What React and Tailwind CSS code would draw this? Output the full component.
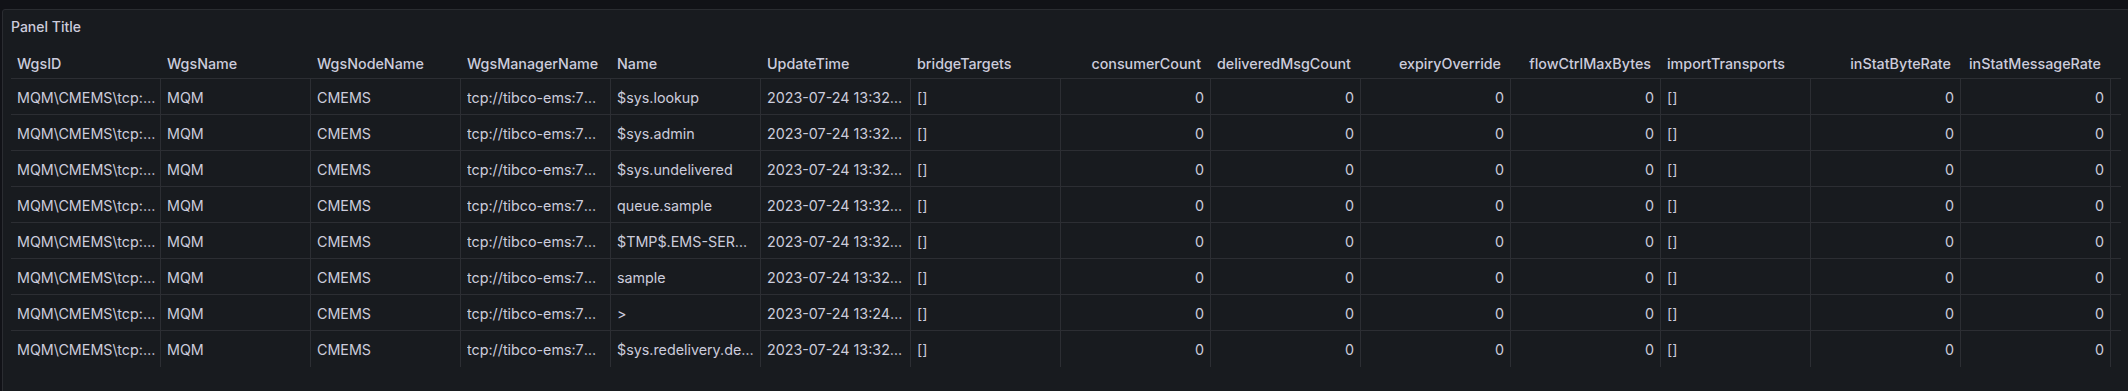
import React from "react";

const columns = [
  { name: "WgsID", align: "left", pad: "pr-[3px]" },
  { name: "WgsName", align: "left", pad: "pr-[6px]" },
  { name: "WgsNodeName", align: "left", pad: "pr-[6px]" },
  { name: "WgsManagerName", align: "left", pad: "pr-[6px]" },
  { name: "Name", align: "left", pad: "pr-[6px]" },
  { name: "UpdateTime", align: "left", pad: "pr-[6px]" },
  { name: "bridgeTargets", align: "left", pad: "pr-[6px]" },
  { name: "consumerCount", align: "right", pad: "pr-[6px]" },
  { name: "deliveredMsgCount", align: "right", pad: "pr-[6px]" },
  { name: "expiryOverride", align: "right", pad: "pr-[6px]" },
  { name: "flowCtrlMaxBytes", align: "right", pad: "pr-[6px]" },
  { name: "importTransports", align: "left", pad: "pr-[6px]" },
  { name: "inStatByteRate", align: "right", pad: "pr-[6px]" },
  { name: "inStatMessageRate", align: "right", pad: "pr-[6px]" },
  { name: "", align: "right", pad: "pr-[6px]" },
];

const queues = [
  ["$sys.lookup", "2023-07-24 13:32:05"],
  ["$sys.admin", "2023-07-24 13:32:05"],
  ["$sys.undelivered", "2023-07-24 13:32:05"],
  ["queue.sample", "2023-07-24 13:32:05"],
  ["$TMP$.EMS-SERVER.1F4C64BE4A2.1", "2023-07-24 13:32:05"],
  ["sample", "2023-07-24 13:32:05"],
  [">", "2023-07-24 13:24:51"],
  ["$sys.redelivery.delay", "2023-07-24 13:32:05"],
];

const rows = queues.map(([name, time]) => [
  "MQM\\CMEMS\\tcp://tibco-ems:7222",
  "MQM",
  "CMEMS",
  "tcp://tibco-ems:7222",
  name,
  time,
  "[]",
  "0",
  "0",
  "0",
  "0",
  "[]",
  "0",
  "0",
  "",
]);

export default function App() {
  return (
    <div
      className="w-[2128px] h-[391px] overflow-hidden bg-[#111217] pt-[9px] pl-[2px]"
      style={{ fontFamily: "Inter, 'Noto Sans', sans-serif" }}
    >
      <div className="w-[2128px] h-[420px] bg-[#181b1f] border border-[#2a2c31] rounded-[3px] flex flex-col">
        <div className="h-[32px] px-[8px] flex items-center shrink-0">
          <span className="text-[14px] font-medium text-[#ccccdc]">Panel Title</span>
        </div>
        <div className="px-[8px]">
          <div className="w-[2110px] overflow-hidden">
            <div className="flex h-[37px] border-b border-[#2c2e33] pt-[7px]">
              {columns.map((c, k) => (
                <div
                  key={k}
                  className={`w-[150px] shrink-0 flex items-center pl-[6px] pr-[10px] text-[14.3px] font-medium text-[#ccccdc] whitespace-nowrap overflow-hidden ${
                    c.align === "right" ? "justify-end" : "justify-start"
                  }`}
                >
                  {c.name}
                </div>
              ))}
            </div>
            {rows.map((r, i) => (
              <div
                key={i}
                className={`flex h-[36px] ${i < rows.length - 1 ? "border-b border-[#2c2e33]" : ""}`}
              >
                {r.map((v, j) => (
                  <div
                    key={j}
                    className={`w-[150px] shrink-0 border-r border-[#2c2e33] flex items-center pt-[2px] pl-[6px] text-[14.3px] text-[#ccccdc] ${columns[j].pad} ${
                      columns[j].align === "right" ? "justify-end" : "justify-start"
                    }`}
                  >
                    <span className="block truncate">{v}</span>
                  </div>
                ))}
              </div>
            ))}
          </div>
        </div>
      </div>
    </div>
  );
}
